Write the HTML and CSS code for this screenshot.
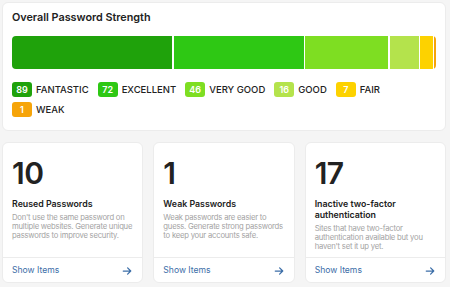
FILE: index.html
```html
<!DOCTYPE html>
<html lang="en">
<head>
  <meta charset="UTF-8">
  <meta name="viewport" content="width=device-width, initial-scale=1.0">
  <title>Password Health</title>
  <link rel="stylesheet" href="styles.css">
</head>
<body>
  <main class="page">
    <section class="card strength">
      <h2 class="strength-title">Overall Password Strength</h2>
      <div class="bar">
        <span class="seg fantastic" style="flex: 89"></span>
        <span class="seg excellent" style="flex: 72"></span>
        <span class="seg very-good" style="flex: 46"></span>
        <span class="seg good" style="flex: 16"></span>
        <span class="seg fair" style="flex: 7"></span>
        <span class="seg weak" style="flex: 1"></span>
      </div>
      <ul class="legend">
        <li><span class="badge fantastic">89</span>FANTASTIC</li>
        <li><span class="badge excellent">72</span>EXCELLENT</li>
        <li><span class="badge very-good">46</span>VERY GOOD</li>
        <li><span class="badge good">16</span>GOOD</li>
        <li><span class="badge fair">7</span>FAIR</li>
        <li><span class="badge weak">1</span>WEAK</li>
      </ul>
    </section>

    <div class="stats">
      <section class="card stat">
        <div class="stat-body">
          <div class="stat-num">10</div>
          <h3 class="stat-title">Reused Passwords</h3>
          <p class="stat-desc">Don't use the same password on multiple websites. Generate unique passwords to improve security.</p>
        </div>
        <a class="stat-link" href="#">Show Items
          <svg width="10" height="10" viewBox="0 0 16 16" fill="none" stroke="currentColor" stroke-width="2" stroke-linecap="round" stroke-linejoin="round"><path d="M2 8h12M9 3l5 5-5 5"/></svg>
        </a>
      </section>
      <section class="card stat">
        <div class="stat-body">
          <div class="stat-num">1</div>
          <h3 class="stat-title">Weak Passwords</h3>
          <p class="stat-desc">Weak passwords are easier to guess. Generate strong passwords to keep your accounts safe.</p>
        </div>
        <a class="stat-link" href="#">Show Items
          <svg width="10" height="10" viewBox="0 0 16 16" fill="none" stroke="currentColor" stroke-width="2" stroke-linecap="round" stroke-linejoin="round"><path d="M2 8h12M9 3l5 5-5 5"/></svg>
        </a>
      </section>
      <section class="card stat">
        <div class="stat-body">
          <div class="stat-num">17</div>
          <h3 class="stat-title">Inactive two-factor authentication</h3>
          <p class="stat-desc">Sites that have two-factor authentication available but you haven't set it up yet.</p>
        </div>
        <a class="stat-link" href="#">Show Items
          <svg width="10" height="10" viewBox="0 0 16 16" fill="none" stroke="currentColor" stroke-width="2" stroke-linecap="round" stroke-linejoin="round"><path d="M2 8h12M9 3l5 5-5 5"/></svg>
        </a>
      </section>
    </div>
  </main>
</body>
</html>
```
FILE: styles.css
```css
:root {
  --fantastic: #1fa20b;
  --excellent: #2ec814;
  --very-good: #7ede22;
  --good: #b4e34c;
  --fair: #fdd200;
  --weak: #f6a409;
  --text: #222222;
  --muted: #a3a3a3;
  --link: #3c6ea8;
  --line: #ececec;
}
body {
  font-family: Inter, 'Noto Sans', sans-serif;
  margin: 0;
  background-color: #f5f5f5;
  color: var(--text);
}
.page {
  padding: 2px 4px 0 2px;
}
.card {
  background-color: #ffffff;
  border: 1px solid var(--line);
  border-radius: 6px;
  box-sizing: border-box;
}
.strength {
  padding: 8px 9px 13px 9px;
  margin-bottom: 11px;
}
.strength-title {
  font-size: 10.8px;
  font-weight: 600;
  margin: 0 0 11px 0;
  line-height: 14px;
}
.bar {
  display: flex;
  gap: 1.5px;
  height: 33px;
  border-radius: 4px;
  overflow: hidden;
}
.seg.fantastic { background-color: var(--fantastic); }
.seg.excellent { background-color: var(--excellent); }
.seg.very-good { background-color: var(--very-good); }
.seg.good { background-color: var(--good); }
.seg.fair { background-color: var(--fair); }
.seg.weak { background-color: var(--weak); }
.legend {
  list-style: none;
  margin: 13px 0 0 0;
  padding: 0;
  display: flex;
  flex-wrap: wrap;
  column-gap: 9px;
  row-gap: 5px;
}
.legend li {
  display: flex;
  align-items: center;
  gap: 4px;
  font-size: 9.5px;
  font-weight: 500;
  line-height: 15px;
}
.badge {
  display: inline-block;
  min-width: 20px;
  height: 15px;
  line-height: 15px;
  border-radius: 3px;
  color: #ffffff;
  font-weight: 600;
  text-align: center;
  font-size: 9px;
}
.badge.fantastic { background-color: var(--fantastic); }
.badge.excellent { background-color: var(--excellent); }
.badge.very-good { background-color: var(--very-good); }
.badge.good { background-color: var(--good); }
.badge.fair { background-color: var(--fair); }
.badge.weak { background-color: var(--weak); }
.stats {
  display: grid;
  grid-template-columns: repeat(3, 1fr);
  gap: 10px;
}
.stat {
  display: flex;
  flex-direction: column;
  height: 141px;
}
.stat-body {
  flex: 1;
  padding: 12px 5px 0 9px;
}
.stat-num {
  font-size: 30px;
  font-weight: 600;
  line-height: 36px;
  letter-spacing: -0.5px;
}
.stat-title {
  font-size: 8.8px;
  font-weight: 600;
  line-height: 11px;
  margin: 7px 0 4px 0;
}
.stat-desc {
  font-size: 7.7px;
  line-height: 9px;
  letter-spacing: -0.22px;
  color: var(--muted);
  margin: 0;
}
.stat-link {
  display: flex;
  align-items: center;
  justify-content: space-between;
  border-top: 1px solid var(--line);
  padding: 7px 10px 6px 9px;
  font-size: 8.6px;
  line-height: 11px;
  color: var(--link);
  text-decoration: none;
}
```
